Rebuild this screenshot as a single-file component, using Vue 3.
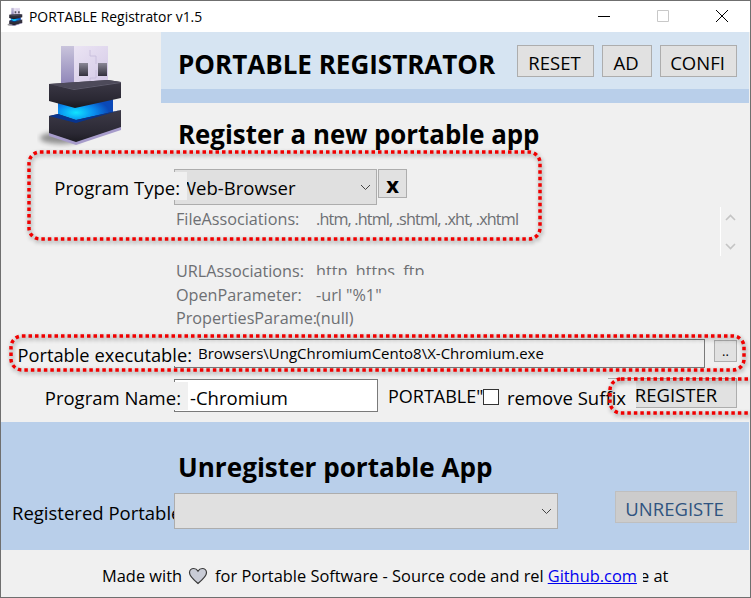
<script setup>
const properties = [
  { name: 'FileAssociations:', value: '.htm, .html, .shtml, .xht, .xhtml', dense: true },
  { name: 'URLAssociations:', value: 'http, https, ftp', clipped: true },
  { name: 'OpenParameter:', value: '-url "%1"' },
  { name: 'PropertiesParame:', value: '(null)' },
]

// red marks drawn on top of the screenshot: x, y, w, h
const marks = [
  { x: 29, y: 152, w: 511, h: 87 },
  { x: 11, y: 336, w: 733, h: 34 },
  { x: 610, y: 379, w: 150, h: 34 },
]
</script>

<template>
  <div class="window">
    <svg class="defs" width="0" height="0" aria-hidden="true">
      <defs>
        <linearGradient id="plugSide" x1="0" y1="0" x2="0" y2="1">
          <stop offset="0" stop-color="#c9c4dc" />
          <stop offset="1" stop-color="#8f86b8" />
        </linearGradient>
        <linearGradient id="plugFace" x1="0" y1="0" x2="1" y2="1">
          <stop offset="0" stop-color="#efe9f6" />
          <stop offset="1" stop-color="#d3c8e6" />
        </linearGradient>
        <linearGradient id="holeFill" x1="0" y1="0" x2="0" y2="1">
          <stop offset="0" stop-color="#8a8796" />
          <stop offset="1" stop-color="#33313d" />
        </linearGradient>
        <linearGradient id="band" x1="0" y1="0" x2="0" y2="1">
          <stop offset="0" stop-color="#3d3a48" />
          <stop offset="0.7" stop-color="#2a2833" />
          <stop offset="1" stop-color="#18171d" />
        </linearGradient>
        <radialGradient id="glow" cx="0.33" cy="0.6" r="0.6">
          <stop offset="0" stop-color="#10e4ff" />
          <stop offset="0.55" stop-color="#0a8df0" />
          <stop offset="1" stop-color="#0b49b8" />
        </radialGradient>
        <filter id="soft" x="-50%" y="-50%" width="200%" height="200%">
          <feGaussianBlur stdDeviation="2.5" />
        </filter>
        <symbol id="usb" viewBox="36 44 88 104">
          <ellipse cx="60" cy="138" rx="21" ry="6" fill="#000" opacity="0.4" filter="url(#soft)" />
          <path d="M60 46h47v38H60z" fill="url(#plugFace)" />
          <path d="M60 46h13v38H60z" fill="url(#plugSide)" />
          <path d="M89 50v6h6v8M95 70v8h-6v6" fill="none" stroke="#c4bad9" stroke-width="0.8" />
          <path d="M78 63h9v13h-9zM97 63h9v13h-9z" fill="url(#holeFill)" />
          <path d="M57 100l55-3v16l-36 10-19-5z" fill="url(#glow)" />
          <path d="M48 84l59-4 13 2v16l-46 10-26-7z" fill="url(#band)" />
          <path d="M48 84l59-4 13 2-47 7z" fill="#4d4a5a" />
          <path d="M73 89l47-7v1l-47 7-25-6z" fill="#5f5c6d" />
          <path d="M48 116l9-2 18 6 45-10v19l-45 15-27-9z" fill="url(#band)" />
          <path d="M48 116l9-2 18 6 45-10-45 13z" fill="#07348e" />
          <path d="M48 133l27 9 45-15v3l-45 15-27-9z" fill="#a79ccb" />
        </symbol>
      </defs>
    </svg>

    <header class="titlebar">
      <svg class="app-icon" width="16" height="20"><use href="#usb" /></svg>
      <span class="title">PORTABLE Registrator v1.5</span>
      <div class="win-controls">
        <svg width="14" height="14" viewBox="0 0 14 14"><path d="M1 7.500h12" stroke="#000" stroke-width="1" /></svg>
        <svg width="14" height="14" viewBox="0 0 14 14"><path d="M1.500 1.500h11v11h-11z" fill="none" stroke="#c8c8c8" /></svg>
        <svg width="14" height="14" viewBox="0 0 14 14"><path d="M1 1l12 12M13 1L1 13" stroke="#000" stroke-width="1" /></svg>
      </div>
    </header>

    <main class="content">
      <section class="top">
        <div class="logo">
          <svg width="88" height="104"><use href="#usb" /></svg>
        </div>
        <div class="top-main">
          <div class="banner">
            <h1>PORTABLE REGISTRATOR</h1>
            <button class="btn btn-reset">RESET</button>
            <button class="btn btn-ad">AD</button>
            <button class="btn btn-confi">CONFI</button>
          </div>
          <h2 class="heading-register">Register a new portable app</h2>
        </div>
      </section>

      <div class="row-type">
        <label class="cover cover-type">Program Type:</label>
        <div class="select select-type">
          <span>Web-Browser</span>
          <svg class="chev" width="11" height="7" viewBox="0 0 11 7"><path d="M1 1l4.500 4.500L10 1" fill="none" stroke="#444" /></svg>
        </div>
        <button class="btn btn-x">x</button>
      </div>

      <div class="props-wrap">
        <div class="props">
          <div
            v-for="p in properties"
            :key="p.name"
            class="prop"
          >
            <span class="prop-name">{{ p.name }}</span>
            <span class="prop-value" :class="{ 'prop-value-clipped': p.clipped, 'prop-value-dense': p.dense }">{{ p.value }}</span>
          </div>
        </div>
        <div class="scroller">
          <svg width="11" height="7" viewBox="0 0 11 7"><path d="M1 6l4.500-4.500L10 6" fill="none" stroke="#c4c4c4" stroke-width="1.600" /></svg>
          <svg width="11" height="7" viewBox="0 0 11 7"><path d="M1 1l4.500 4.500L10 1" fill="none" stroke="#c4c4c4" stroke-width="1.600" /></svg>
        </div>
      </div>

      <div class="row-exec">
        <label class="cover cover-exec">Portable executable:</label>
        <input class="input input-exec" value="Browsers\UngChromiumCento8\X-Chromium.exe" readonly>
        <button class="btn btn-browse">..</button>
      </div>

      <div class="row-name">
        <label class="cover cover-name">Program Name:</label>
        <input class="input input-name" value="-Chromium" readonly>
        <span class="portable">PORTABLE"</span>
        <span class="check"></span>
        <span class="suffix">remove Suffix</span>
        <button class="btn btn-register">REGISTER</button>
      </div>

      <section class="unregister">
        <h2 class="heading-unregister">Unregister portable App</h2>
        <div class="row-registered">
          <label class="registered-label">Registered Portable</label>
          <div class="select select-registered">
            <svg class="chev" width="11" height="7" viewBox="0 0 11 7"><path d="M1 1l4.500 4.500L10 1" fill="none" stroke="#444" /></svg>
          </div>
          <button class="btn btn-unregister" disabled>UNREGISTE</button>
        </div>
      </section>

      <footer class="footer">
        <span>Made with</span>
        <svg class="heart" width="20" height="18" viewBox="0 0 20 18">
          <path d="M10 16.500C4 11.500 1.500 9 1.500 5.800 1.500 3.300 3.400 1.500 5.700 1.500c1.800 0 3.300 1 4.300 2.600 1-1.600 2.500-2.600 4.300-2.600 2.300 0 4.200 1.800 4.200 4.300 0 3.200-2.500 5.700-8.500 10.700z" fill="#c9ccd6" stroke="#3a3a3a" stroke-width="1.200" />
        </svg>
        <span>for Portable Software - Source code and rel</span>
        <span class="link-box"><a class="link" href="#">Github.com</a></span>
        <span class="footer-end">e at</span>
      </footer>
    </main>

    <svg class="marks" width="751" height="598" aria-hidden="true">
      <rect
        v-for="(m, i) in marks"
        :key="i"
        :x="m.x"
        :y="m.y"
        :width="m.w"
        :height="m.h"
        rx="11"
        fill="none"
        stroke="#f00000"
        stroke-width="3.500"
        stroke-dasharray="3.500 3"
      />
    </svg>
  </div>
</template>

<style>
html, body { margin: 0; background: #f0f0f0; }
</style>

<style scoped>
.window {
  position: relative;
  box-sizing: border-box;
  width: 751px;
  height: 598px;
  border: 1px solid #6f6f6f;
  background: #f0f0f0;
  font-family: "Open Sans", "Noto Sans", sans-serif;
  font-size: 18.500px;
  color: #000;
  overflow: hidden;
  display: flex;
  flex-direction: column;
}
.defs { position: absolute; }

.titlebar {
  flex: none;
  height: 31px;
  background: #fff;
  display: flex;
  align-items: center;
  padding-left: 6px;
}
.app-icon { margin-right: 6px; }
.title { font-size: 13.900px; }
.win-controls {
  margin-left: auto;
  display: flex;
  gap: 45px;
  padding-right: 21px;
  margin-top: -1px;
}

.content {
  flex: 1;
  display: flex;
  flex-direction: column;
  padding-right: 1px;
  min-height: 0;
}

.top {
  flex: none;
  height: 137px;
  display: flex;
}
.logo {
  width: 160px;
  padding: 12px 0 0 36px;
  box-sizing: border-box;
}
.top-main { flex: 1; }
.banner {
  box-sizing: border-box;
  height: 71px;
  background: #d6e4f2;
  border-bottom: 14px solid #b9cfea;
  display: flex;
  align-items: flex-start;
  padding: 13px 0 0 17px;
}
h1, h2 { margin: 0; font-weight: 700; }
h1 { font-size: 26px; line-height: 38px; width: 339px; flex: none; white-space: nowrap; }
.heading-register, .heading-unregister { line-height: 34px; white-space: nowrap; }
.heading-register { font-size: 25.850px; margin: 14px 0 0 17px; }

.btn {
  box-sizing: border-box;
  font: inherit;
  color: #000;
  background: #e1e1e1;
  border: 1px solid #adadad;
  padding: 3px 2px 0 0;
  white-space: nowrap;
  overflow: hidden;
}
.btn-reset { width: 77px; height: 32px; margin-right: 8px; }
.btn-ad { width: 50px; height: 32px; margin-right: 8px; }
.btn-confi { width: 77px; height: 32px; }

.cover {
  position: relative;
  z-index: 1;
  box-sizing: border-box;
  background: #f0f0f0;
  text-align: right;
  padding-right: 7px;
  white-space: nowrap;
}

.row-type {
  flex: none;
  display: flex;
  align-items: flex-start;
  height: 38px;
}
.cover-type { width: 187px; height: 28px; margin: 3px -13px 0 -1px; line-height: 32px; }
.select {
  box-sizing: border-box;
  position: relative;
  background: #e0e0e0;
  border: 1px solid #adadad;
  display: flex;
  align-items: center;
  white-space: nowrap;
}
.select-type { width: 203px; height: 36px; padding: 1px 0 0 4px; margin-right: 1px; }
.chev { position: absolute; right: 5px; top: 50%; margin-top: -3px; }
.btn-x { width: 29px; height: 29px; padding: 0; font-weight: 700; font-size: 22px; line-height: 22px; }

.props-wrap {
  flex: none;
  height: 132px;
  display: flex;
  align-items: flex-start;
}
.props { padding-left: 175px; flex: 1; font-size: 16.200px; color: #6d6f73; }
.prop {
  display: flex;
  height: 23.500px;
  line-height: 24px;
  white-space: nowrap;
}
.prop:nth-child(2) { margin-top: 28.500px; }
.prop-name { width: 140px; flex: none; }
.prop-value-clipped { height: 16px; overflow: hidden; }
.prop-value-dense { letter-spacing: -0.850px; }
.scroller {
  box-sizing: border-box;
  flex: none;
  width: 29px;
  height: 49px;
  border-left: 1px solid #fff;
  display: flex;
  flex-direction: column;
  justify-content: space-between;
  align-items: center;
  padding: 7px 9px 6px 0;
}

.row-exec {
  flex: none;
  display: flex;
  align-items: flex-start;
  height: 40px;
}
.cover-exec { width: 199px; height: 27px; margin: 0 -25px 0 -1px; line-height: 31px; font-size: 18.300px; }
.input {
  box-sizing: border-box;
  font: inherit;
  background: #fff;
  border: 1px solid #7a7a7a;
  outline: none;
  color: #000;
}
.input-exec {
  width: 531px;
  height: 29px;
  padding: 0 0 1px 23px;
  background: #f0f0f0;
  font-size: 15px;
  margin-right: 9px;
}
.btn-browse { width: 23px; height: 22px; margin-top: 1px; padding: 0; font-size: 13px; line-height: 14px; }

.row-name {
  flex: none;
  display: flex;
  align-items: flex-start;
  height: 43px;
}
.cover-name { width: 188px; height: 28px; margin: 3px -14px 0 -1px; line-height: 31px; }
.input-name { width: 204px; height: 33px; padding: 3px 0 0 15px; margin-right: 10px; }
.portable { width: 95px; flex: none; font-size: 18px; line-height: 35px; white-space: nowrap; }
.check {
  box-sizing: border-box;
  width: 16px;
  height: 16px;
  margin: 10px 8px 0 0;
  background: #fff;
  border: 1px solid #333;
  flex: none;
  position: relative;
  z-index: 1;
}
.suffix {
  position: relative;
  z-index: 1;
  box-sizing: border-box;
  width: 129px;
  line-height: 37px;
  height: 33px;
  background: #f0f0f0;
  white-space: nowrap;
}
.btn-register { width: 129px; height: 30px; margin: -1px 0 0 -28px; padding-left: 9px; }

.unregister {
  flex: none;
  box-sizing: border-box;
  height: 128px;
  background: #b9cfea;
  padding-top: 28px;
}
.heading-unregister { font-size: 26.100px; margin-left: 177px; }
.row-registered {
  display: flex;
  align-items: flex-start;
  margin-top: 9px;
}
.registered-label {
  width: 173px;
  flex: none;
  overflow: hidden;
  padding-left: 11px;
  box-sizing: border-box;
  line-height: 40px;
  white-space: nowrap;
}
.select-registered { width: 384px; height: 36px; margin-right: 57px; }
.btn-unregister {
  width: 122px;
  height: 32px;
  margin-top: -2px;
  padding-right: 3px;
  background: #cccccc;
  border-color: #bfbfbf;
  color: #2f5480;
}

.footer {
  flex: 1;
  display: flex;
  align-items: center;
  padding: 4px 0 0 101px;
  font-size: 16.400px;
  white-space: nowrap;
}
.heart { margin: 0 7px 0 6px; }
/* the link's own box sits over the text after it */
.link-box {
  position: relative;
  z-index: 1;
  margin: 0 -6px 0 4px;
  padding-right: 6px;
  background: #f0f0f0;
}
.link { color: #0000ee; }
.footer-end { margin-left: 3px; }

.marks {
  position: absolute;
  left: -1px;
  top: -1px;
  pointer-events: none;
  z-index: 5;
  filter: drop-shadow(1px 2px 2px rgba(0, 0, 0, 0.45));
}
</style>
